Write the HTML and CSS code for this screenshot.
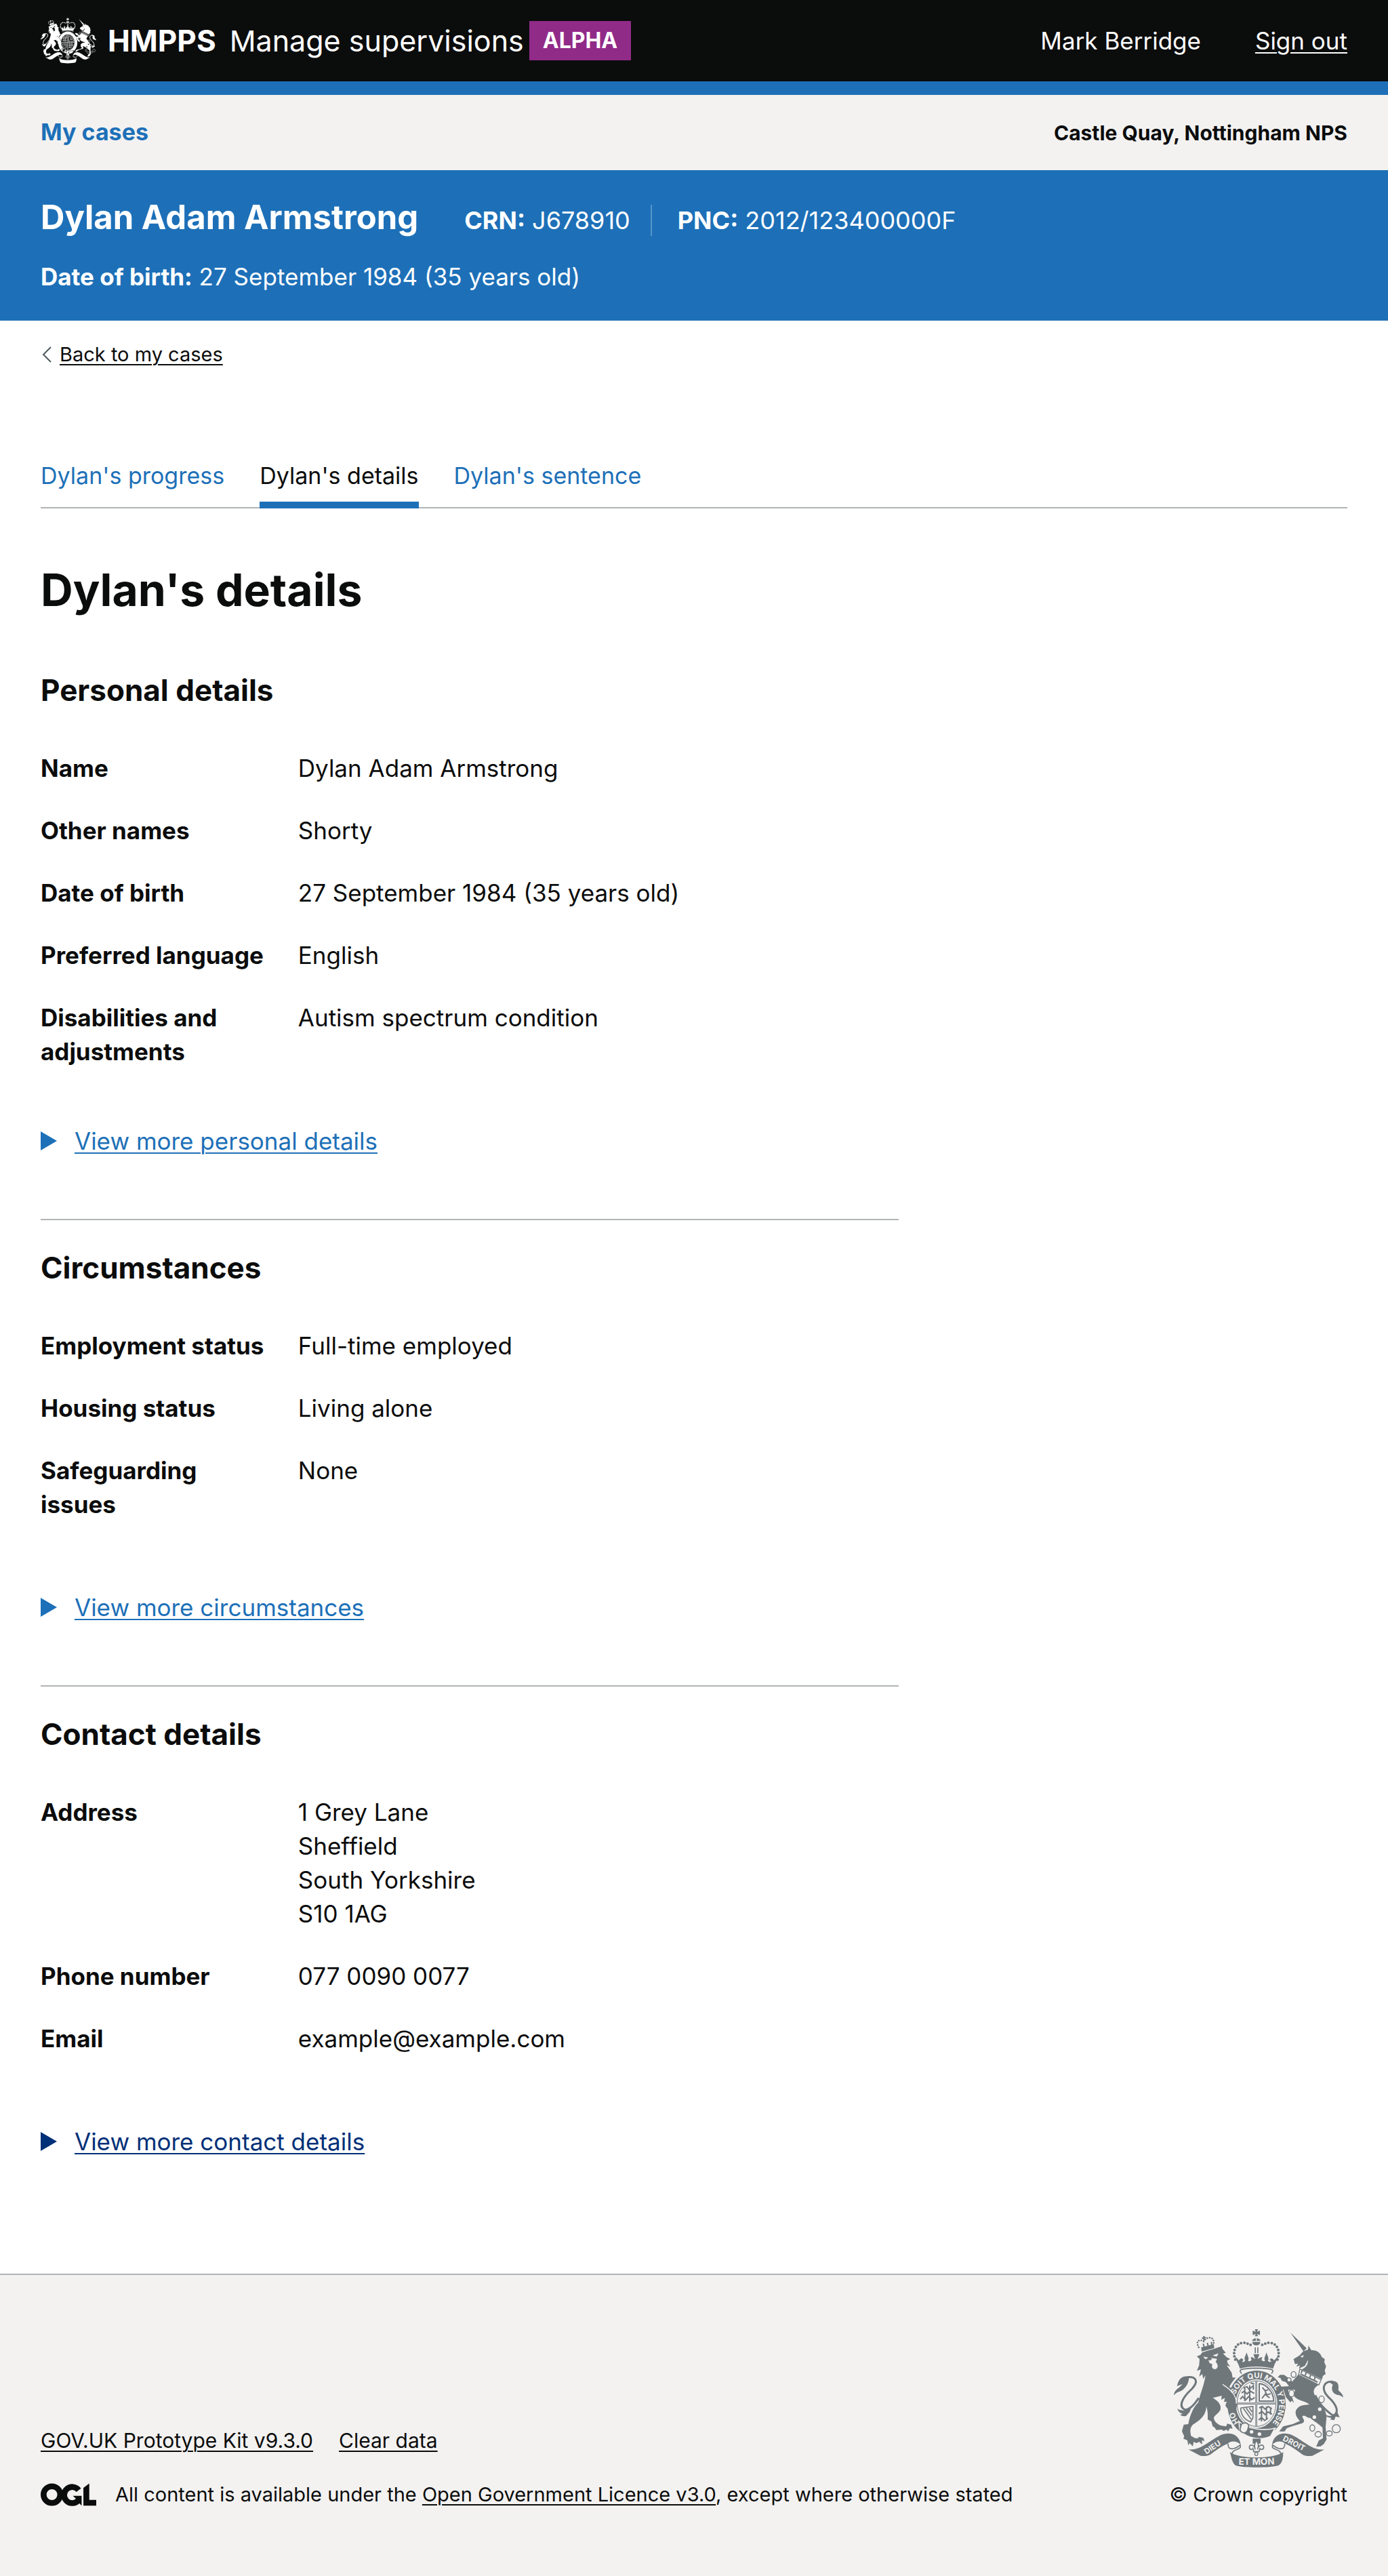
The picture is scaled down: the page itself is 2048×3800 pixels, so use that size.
FILE: index.html
```html
<!DOCTYPE html>
<html lang="en">
<head>
<meta charset="utf-8">
<meta name="viewport" content="width=device-width, initial-scale=1">
<title>Dylan's details - Manage supervisions</title>
<link rel="stylesheet" href="styles.css">
</head>
<body>
<header class="header">
  <a class="header-brand" href="#">
    <svg class="header-crest" viewBox="96 108 750 612" aria-hidden="true"><use href="#royal-arms"/></svg>
    <span class="header-org">HMPPS</span>
    <span class="header-service">Manage supervisions</span>
    <strong class="tag">ALPHA</strong>
  </a>
  <div class="header-user">
    <span>Mark Berridge</span>
    <a href="#">Sign out</a>
  </div>
</header>

<nav class="primary-nav" aria-label="Primary">
  <a href="#">My cases</a>
  <strong>Castle Quay, Nottingham NPS</strong>
</nav>

<section class="banner" aria-label="Case">
  <div class="banner-row">
    <span class="banner-name">Dylan Adam Armstrong</span>
    <span class="banner-ids">
      <span class="banner-id"><b>CRN:</b> J678910</span>
      <span class="banner-id"><b>PNC:</b> 2012/123400000F</span>
    </span>
  </div>
  <div><b>Date of birth:</b> 27 September 1984 (35 years old)</div>
</section>

<main class="main">
  <a class="back" href="#">
    <svg class="back-icon" viewBox="0 0 14 24" aria-hidden="true"><path d="M13 1 2 12l11 11"/></svg>
    <span>Back to my cases</span>
  </a>

  <nav class="tabs" aria-label="Case sections">
    <a class="tab" href="#">Dylan's progress</a>
    <a class="tab tab-current" href="#" aria-current="page">Dylan's details</a>
    <a class="tab" href="#">Dylan's sentence</a>
  </nav>

  <h1>Dylan's details</h1>

  <div class="content">
    <section class="group group-tight">
      <h2>Personal details</h2>
      <dl class="summary">
        <div class="row"><dt>Name</dt><dd>Dylan Adam Armstrong</dd></div>
        <div class="row"><dt>Other names</dt><dd>Shorty</dd></div>
        <div class="row"><dt>Date of birth</dt><dd>27 September 1984 (35 years old)</dd></div>
        <div class="row"><dt>Preferred language</dt><dd>English</dd></div>
        <div class="row"><dt>Disabilities and adjustments</dt><dd>Autism spectrum condition</dd></div>
      </dl>
      <details>
        <summary><span>View more personal details</span></summary>
      </details>
    </section>

    <section class="group">
      <h2>Circumstances</h2>
      <dl class="summary">
        <div class="row"><dt>Employment status</dt><dd>Full-time employed</dd></div>
        <div class="row"><dt>Housing status</dt><dd>Living alone</dd></div>
        <div class="row"><dt>Safeguarding issues</dt><dd>None</dd></div>
      </dl>
      <details>
        <summary><span>View more circumstances</span></summary>
      </details>
    </section>

    <section class="group">
      <h2>Contact details</h2>
      <dl class="summary">
        <div class="row"><dt>Address</dt><dd>1 Grey Lane<br>Sheffield<br>South Yorkshire<br>S10 1AG</dd></div>
        <div class="row"><dt>Phone number</dt><dd>077 0090 0077</dd></div>
        <div class="row"><dt>Email</dt><dd>example@example.com</dd></div>
      </dl>
      <details class="is-hover">
        <summary><span>View more contact details</span></summary>
      </details>
    </section>
  </div>
</main>

<footer class="footer">
  <div class="footer-meta">
    <div class="footer-links">
      <a href="#">GOV.UK Prototype Kit v9.3.0</a>
      <a href="#">Clear data</a>
    </div>
    <div class="footer-licence">
      <svg class="ogl" viewBox="59 90 247 100" role="img" aria-label="OGL">
        <circle cx="109" cy="140" r="37" fill="none" stroke="currentColor" stroke-width="26"/>
        <path d="M228 120A36 36 0 1 0 226 166" fill="none" stroke="currentColor" stroke-width="26"/>
        <path d="M202 145H241V189L230 178L213 167L216 158ZM249 110 275 90V163H306V189H249Z" fill="currentColor"/>
      </svg>
      <span>All content is available under the <a href="#">Open Government Licence v3.0</a>, except where otherwise stated</span>
    </div>
  </div>
  <a class="footer-copyright" href="#">
    <svg class="footer-crest" viewBox="96 108 750 612" aria-hidden="true">
      <defs>
        <g id="royal-arms">
          <!-- lion -->
          <g fill="currentColor">
            <path d="M198 228 214 221 222 210 300 186 308 182 312 196 326 212 314 216 330 232 346 240 332 246 334 258 346 274 330 268 352 300 356 322 370 322 352 345 342 362C360 376 372 392 370 412L376 436 364 450 372 462 356 456 350 468 344 456 334 460 324 446 330 428 318 430 322 412 306 420 308 402 268 412C290 424 308 442 302 464 294 482 276 488 273 500 274 516 290 528 304 534L328 538 332 526 350 530 356 548 344 546 336 560 330 552 316 558 308 552 284 554 276 542 268 538 262 516 246 508 246 492C246 474 244 462 240 450 238 486 216 510 180 530 166 545 168 560 172 580L190 590 204 590 206 584 226 588 232 602 220 600 222 618 208 606 196 612 184 606 180 626 166 612 160 622 156 600 138 592 142 582 132 560 136 544 140 530 160 528C166 490 184 450 204 432 214 390 232 350 236 312L226 328 222 306 208 318 216 286 198 292 208 268 210 240Z"/>
            <path d="M164 316C130 314 118 326 110 360L134 350C118 372 98 374 96 400 112 382 124 386 138 374 152 362 162 346 164 316Z"/>
            <path d="M112 460C126 470 146 470 172 458L166 474 150 492C138 494 130 492 124 486L136 482C124 480 116 474 112 460Z"/>
            <path d="M217 188 273 174 275 192 219 207Z"/>
          </g>
          <path d="M206 412C188 440 168 464 146 464 112 450 136 408 176 372 206 340 196 318 158 320" fill="none" stroke="currentColor" stroke-width="9"/>
          <path d="M206 188C190 160 210 150 228 162 238 140 278 136 272 174" fill="none" stroke="currentColor" stroke-width="8" stroke-linecap="round" stroke-dasharray="0 11"/>
          <path d="M229 138V160M220 148 238 145M226 172 230 186M244 168 248 182M262 164 264 178" stroke="currentColor" stroke-width="6"/>
          <path d="M216 209 282 191M228 230 246 234 236 240ZM270 224 292 216 286 228ZM250 246C262 250 270 236 262 236L286 240 280 252C292 264 292 280 280 284 268 284 262 276 268 262L256 258Z" fill="var(--crest-ground)" stroke="var(--crest-ground)" stroke-width="2"/>

          <!-- crown -->
          <path d="M454 108H469L464 119 477 114V134L464 128 469 139H454L459 128 445 134V114L459 119ZM442 160C446 144 476 144 480 160ZM443 164H479C478 174 472 179 461 179S444 174 443 164ZM454 188H459V214H454ZM465 188H470V214H465Z" fill="currentColor"/>
          <path d="M461 143V160" stroke="var(--crest-ground)" stroke-width="4"/>
          <path d="M368 242C356 214 364 168 404 168 426 168 430 182 448 176M555 242C567 214 559 168 519 168 497 168 493 182 475 176" fill="none" stroke="currentColor" stroke-width="12" stroke-linecap="round" stroke-dasharray="0 14.5"/>
          <path d="M368 228 384 246C392 234 398 234 404 244L398 252C406 256 410 250 412 244 404 238 414 226 418 210 422 226 432 238 424 246 428 252 436 250 440 244L436 232C446 230 450 236 456 240L448 218H475L467 240C474 236 480 230 488 232L484 244C488 250 496 252 500 246 492 238 502 226 506 210 510 226 520 238 512 246 516 254 522 254 528 250L520 244C526 234 532 234 540 246L556 228C552 250 540 262 536 282 490 270 432 270 388 282 384 262 372 250 368 228Z" fill="currentColor"/>
          <path d="M396 304C376 284 400 282 461 280 524 282 548 284 528 304" fill="none" stroke="currentColor" stroke-width="5"/>

          <!-- garter and shield -->
          <ellipse cx="462" cy="439" rx="129" ry="148" fill="currentColor"/>
          <ellipse cx="462" cy="437" rx="92" ry="108" fill="var(--crest-ground)"/>
          <ellipse cx="462" cy="437" rx="86" ry="101" fill="none" stroke="currentColor" stroke-width="3"/>
          <path d="M461 336V536M376 437H548" stroke="currentColor" stroke-width="8"/>
          <path d="M461 336V536M376 437H548" stroke="var(--crest-ground)" stroke-width="2"/>
          <g fill="none" stroke="currentColor" stroke-width="6">
            <path d="M404 368 420 362 428 374 446 360M436 346 452 350M396 390 408 382 420 394 434 382 452 392M390 418 400 406 414 420 428 406 440 420 454 410M410 362V426M432 356V428M448 354V376"/>
            <path d="M474 348V426H538C538 390 510 352 474 348M488 366 500 380 514 376M486 414 500 396 520 412M500 380 506 398 524 394"/>
            <path d="M392 456 446 450V500L436 518C410 510 392 488 392 456M404 458 438 506M416 456 440 490M430 456 442 474" stroke-width="5"/>
            <path d="M474 456 488 450 500 462 514 450 530 460M472 482 486 472 500 486 514 474 530 484M472 510 484 498 498 512 512 500M484 448V516M506 450V510M524 452V486"/>
          </g>
          <path d="M384 516C420 552 500 558 544 546L524 582C480 602 420 592 388 556Z" fill="currentColor" stroke="var(--crest-ground)" stroke-width="5"/>
          <path d="M404 524C388 526 396 540 390 546 386 560 400 568 412 566 428 560 420 548 428 538 426 524 416 520 404 524Z" fill="var(--crest-ground)" stroke="currentColor" stroke-width="5"/>
          <circle cx="440" cy="562" r="8" fill="var(--crest-ground)"/>
          <circle cx="475" cy="572" r="8" fill="var(--crest-ground)"/>
          <path d="M352 440 376 436 372 468 344 470Z" fill="currentColor"/>
          <path d="M312 352C350 376 372 400 374 436" fill="none" stroke="var(--crest-ground)" stroke-width="4"/>
          <path d="M445 592H480V614H445Z" fill="currentColor"/>
          <path d="M461 600C448 620 454 630 456 640 454 620 430 612 430 632 434 644 444 640 446 636L450 650H473L477 636C480 640 490 644 494 632 494 612 470 620 467 640 469 630 476 620 461 600Z" fill="var(--crest-ground)" stroke="currentColor" stroke-width="5"/>
          <circle cx="461" cy="660" r="7" fill="var(--crest-ground)" stroke="currentColor" stroke-width="4"/>

          <!-- unicorn -->
          <g fill="currentColor">
            <path d="M612 123 684 192 670 206ZM668 206 690 198 692 180 704 200C728 200 746 212 750 230L764 240 762 254 770 272 764 290 768 306 756 314 752 330 662 286C684 276 690 262 690 244L676 270 650 282 654 268 638 274 646 260 632 262 626 240 652 224Z"/>
            <path d="M646 310 736 354C714 370 710 382 722 404 740 430 766 450 772 496L768 540 772 596 760 616 746 626 726 628 738 600 756 590 754 544C736 524 716 516 700 500 684 502 676 482 664 494 672 508 678 518 664 524L622 536 596 546 586 560 562 560 580 538 622 528 654 514C638 498 630 480 638 464 652 440 680 444 696 440 668 420 650 428 628 404L632 376 602 376 606 396 620 410 628 434 618 424 612 432 592 408 582 376 566 372 570 362 606 360 592 342 574 336 568 324 556 320 566 310 584 310 604 324 620 340Z"/>
            <path d="M784 342C812 330 830 344 824 376 828 386 844 390 846 410 832 396 816 402 804 390 794 380 794 364 800 354Z"/>
            <path d="M764 484C780 496 804 496 820 476L830 498 812 494 806 510 788 508 794 500C780 500 768 494 764 484Z"/>
          </g>
          <path d="M722 400C744 446 768 466 800 490 832 478 816 440 778 406 748 374 756 336 800 340" fill="none" stroke="currentColor" stroke-width="9"/>
          <path d="M654 284 748 332 738 354 648 310Z" fill="var(--crest-ground)" stroke="currentColor" stroke-width="4"/>
          <path d="M660 302 664 290M678 312 682 298M698 322 702 308M718 332 722 318M656 306 732 342" stroke="currentColor" stroke-width="6"/>
          <path d="M656 228 672 222 666 234Z" fill="var(--crest-ground)"/>
          <g fill="var(--crest-ground)" stroke="currentColor" stroke-width="4">
            <ellipse cx="626" cy="308" rx="11" ry="13"/><circle cx="606" cy="332" r="9"/>
            <ellipse cx="617" cy="392" rx="12" ry="15"/><ellipse cx="750" cy="418" rx="12" ry="15"/>
            <circle cx="742" cy="462" r="10"/><circle cx="718" cy="497" r="10"/>
            <ellipse cx="709" cy="545" rx="11" ry="14"/><ellipse cx="735" cy="573" rx="14" ry="12"/>
            <ellipse cx="784" cy="569" rx="13" ry="11"/><circle cx="815" cy="548" r="18"/>
          </g>

          <!-- motto ribbon -->
          <g id="ribbon-half">
            <path d="M160 640C215 646 250 602 300 578 345 558 386 574 392 618 370 600 350 602 334 614 306 626 282 644 258 662 240 672 226 668 214 668Z" fill="currentColor"/>
            <path d="M336 614C334 648 366 640 390 620 398 648 352 630 352 668" fill="none" stroke="currentColor" stroke-width="5"/>
          </g>
          <use href="#ribbon-half" transform="matrix(-1 0 0 1 923 0)"/>
          <path d="M344 652C386 684 538 684 580 652 580 684 574 706 556 712 520 722 404 722 372 712 354 704 352 676 344 652Z" fill="currentColor"/>
        </g>
        <path id="motto-left" d="M240 662C272 644 300 616 350 598"/>
        <path id="motto-mid" d="M340 704C400 710 524 710 584 702"/>
        <path id="motto-right" d="M576 600C620 618 660 650 716 664"/>
        <path id="garter-start" d="M386 520A102 119 0 0 1 362 462"/>
        <path id="garter-text" d="M369 398A100 117 0 0 1 562 439A100 117 0 0 1 510 542"/>
      </defs>
      <use href="#royal-arms"/>
      <g class="motto">
        <text><textPath href="#garter-start">HO</textPath><textPath href="#garter-text">SOIT QUI MAL Y PENSE</textPath></text>
        <text><textPath href="#motto-left">DIEU</textPath></text>
        <text class="motto-wide"><textPath href="#motto-mid" startOffset="50%" text-anchor="middle">ET MON</textPath></text>
        <text><textPath href="#motto-right">DROIT</textPath></text>
      </g>
    </svg>
    <span>© Crown copyright</span>
  </a>
</footer>
</body>
</html>
```
FILE: styles.css
```css
:root {
  --ink: #0b0c0c;
  --blue: #1d70b8;
  --grey: #f3f2f1;
  --line: #b1b4b6;
}

* { box-sizing: border-box; }

body {
  margin: 0;
  color: var(--ink);
  background: #fff;
  font: 35px/50px Inter, "Liberation Sans", sans-serif;
}

a {
  color: inherit;
  text-decoration-thickness: 2px;
  text-underline-offset: 4px;
}

.header {
  display: flex;
  align-items: center;
  justify-content: space-between;
  min-height: 140px;
  padding: 0 60px;
  border-bottom: 20px solid var(--blue);
  color: #fff;
  background: var(--ink);
}

.header-brand {
  display: flex;
  align-items: center;
  font-size: 44px;
  text-decoration: none;
}

.header-crest {
  --crest-ground: var(--ink);
  width: 82px;
  height: 68px;
  margin-right: 17px;
}

.header-org { font-weight: 700; }
.header-service { margin: 0 8px 0 20px; font-size: 43px; }

.tag {
  padding: 4px 20px;
  background: #912b88;
  font-size: 32px;
}

.header-user {
  display: flex;
  gap: 80px;
}

.primary-nav {
  display: flex;
  align-items: baseline;
  justify-content: space-between;
  padding: 30px 60px;
  background: var(--grey);
}

.primary-nav a {
  color: var(--blue);
  font-size: 34px;
  font-weight: 700;
  text-decoration: none;
}

.primary-nav strong { font-size: 30px; }

.banner {
  padding: 40px 60px;
  color: #fff;
  background: var(--blue);
}

.banner-row {
  display: flex;
  align-items: baseline;
  gap: 68px;
  margin-bottom: 32px;
  line-height: 60px;
}

.banner-name { font-size: 49px; font-weight: 700; }
.banner-ids { display: flex; font-size: 36px; line-height: 46px; }

.banner-id + .banner-id {
  margin-left: 30px;
  padding-left: 38px;
  border-left: 2px solid #5694ca;
}

.main { padding: 30px 60px 170px; }

.back {
  display: flex;
  align-items: center;
  gap: 12px;
  width: fit-content;
  font-size: 29px;
  line-height: 40px;
  text-decoration: none;
}

.back span {
  text-decoration: underline;
  text-decoration-thickness: 2px;
  text-underline-offset: 4px;
}

.back-icon {
  width: 14px;
  height: 24px;
  margin-left: 2px;
  fill: none;
  stroke: #505a5f;
  stroke-width: 2;
}

.tabs {
  display: flex;
  gap: 52px;
  margin: 134px 0 80px;
  border-bottom: 2px solid var(--line);
  font-size: 34px;
}

.tab {
  margin-bottom: -2px;
  padding-bottom: 13px;
  border-bottom: 10px solid transparent;
  color: var(--blue);
  text-decoration: none;
}

.tab-current {
  border-color: var(--blue);
  color: var(--ink);
}

h1 {
  margin: 0 0 78px;
  font-size: 66px;
  line-height: 80px;
}

h2 {
  margin: 0 0 40px;
  font-size: 44px;
  line-height: 60px;
}

.content { width: 66%; max-width: 1266px; }

.group + .group {
  margin-top: 90px;
  padding-top: 40px;
  border-top: 2px solid var(--line);
}

.summary { margin: 0 0 80px; }
.group-tight .summary { margin-bottom: 60px; }

.row {
  display: grid;
  grid-template-columns: 30% 1fr;
  padding: 20px 0 22px;
}

dt { padding-right: 40px; font-weight: 700; }
dd { margin: 0; }

details { color: var(--blue); }
.is-hover { color: #003078; }

summary {
  display: flex;
  align-items: center;
  gap: 26px;
  list-style: none;
  cursor: pointer;
}

summary::before {
  content: "";
  border: solid transparent;
  border-width: 14px 0 14px 24px;
  border-left-color: currentColor;
}

summary span {
  text-decoration: underline;
  text-decoration-thickness: 2px;
  text-underline-offset: 4px;
}

.footer {
  display: flex;
  align-items: flex-end;
  justify-content: space-between;
  padding: 80px 60px 100px;
  border-top: 2px solid var(--line);
  background: var(--grey);
  font-size: 29px;
  line-height: 40px;
}

.footer-links {
  display: flex;
  gap: 38px;
  margin-bottom: 40px;
  font-size: 30px;
}

.footer-licence {
  display: flex;
  align-items: center;
  gap: 28px;
}

.ogl { width: 82px; height: 34px; }

.footer-copyright {
  display: flex;
  flex-direction: column;
  align-items: center;
  gap: 20px;
  text-decoration: none;
}

.footer-crest {
  --crest-ground: var(--grey);
  width: 250px;
  height: 204px;
  color: #6f777b;
}

.motto {
  fill: var(--grey);
  font-size: 34px;
  font-weight: 700;
}

.motto-wide { font-size: 40px; }
```
